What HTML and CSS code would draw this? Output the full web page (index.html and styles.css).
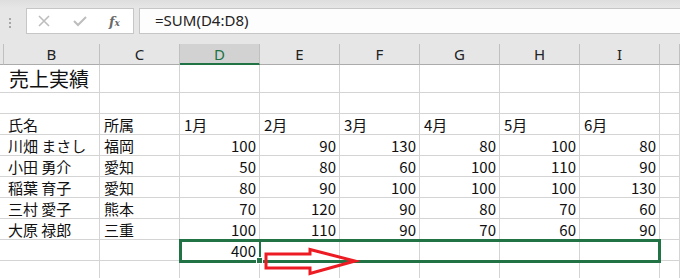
FILE: index.html
```html
<!DOCTYPE html>
<html lang="ja">
<head>
    <meta charset="UTF-8">
    <title>売上実績</title>
    <link rel="stylesheet" href="styles.css">
</head>
<body>
<div class="app">
    <div class="toolbar">
        <div class="grip"><span></span><span></span><span></span></div>
        <div class="fx-buttons">
            <svg class="btn-icon" width="12" height="12" viewBox="0 0 12 12"><path d="M1 1 L11 11 M11 1 L1 11" stroke="#bdbdbd" stroke-width="1.6" fill="none"/></svg>
            <svg class="btn-icon" width="14" height="12" viewBox="0 0 14 12"><path d="M1 6 L5 10 L13 2" stroke="#bdbdbd" stroke-width="2" fill="none"/></svg>
            <span class="fx">f<sub>x</sub></span>
        </div>
        <div class="formula">=SUM(D4:D8)</div>
    </div>

    <div class="sheet">
        <div class="col-head rh"></div>
        <div class="col-head">B</div>
        <div class="col-head">C</div>
        <div class="col-head active">D</div>
        <div class="col-head">E</div>
        <div class="col-head">F</div>
        <div class="col-head">G</div>
        <div class="col-head">H</div>
        <div class="col-head">I</div>
        <div class="col-head"></div>

        <div class="cell rh"></div>
        <div class="cell title">売上実績</div>
        <div class="cell"></div><div class="cell"></div><div class="cell"></div><div class="cell"></div>
        <div class="cell"></div><div class="cell"></div><div class="cell"></div><div class="cell"></div>

        <div class="cell rh"></div>
        <div class="cell"></div><div class="cell"></div><div class="cell"></div><div class="cell"></div>
        <div class="cell"></div><div class="cell"></div><div class="cell"></div><div class="cell"></div><div class="cell"></div>

        <div class="cell rh"></div>
        <div class="cell">氏名</div>
        <div class="cell">所属</div>
        <div class="cell">1月</div>
        <div class="cell">2月</div>
        <div class="cell">3月</div>
        <div class="cell">4月</div>
        <div class="cell">5月</div>
        <div class="cell">6月</div>
        <div class="cell"></div>

        <div class="cell rh"></div>
        <div class="cell">川畑 まさし</div>
        <div class="cell">福岡</div>
        <div class="cell num">100</div>
        <div class="cell num">90</div>
        <div class="cell num">130</div>
        <div class="cell num">80</div>
        <div class="cell num">100</div>
        <div class="cell num">80</div>
        <div class="cell"></div>

        <div class="cell rh"></div>
        <div class="cell">小田 勇介</div>
        <div class="cell">愛知</div>
        <div class="cell num">50</div>
        <div class="cell num">80</div>
        <div class="cell num">60</div>
        <div class="cell num">100</div>
        <div class="cell num">110</div>
        <div class="cell num">90</div>
        <div class="cell"></div>

        <div class="cell rh"></div>
        <div class="cell">稲葉 育子</div>
        <div class="cell">愛知</div>
        <div class="cell num">80</div>
        <div class="cell num">90</div>
        <div class="cell num">100</div>
        <div class="cell num">100</div>
        <div class="cell num">100</div>
        <div class="cell num">130</div>
        <div class="cell"></div>

        <div class="cell rh"></div>
        <div class="cell">三村 愛子</div>
        <div class="cell">熊本</div>
        <div class="cell num">70</div>
        <div class="cell num">120</div>
        <div class="cell num">90</div>
        <div class="cell num">80</div>
        <div class="cell num">70</div>
        <div class="cell num">60</div>
        <div class="cell"></div>

        <div class="cell rh"></div>
        <div class="cell">大原 禄郎</div>
        <div class="cell">三重</div>
        <div class="cell num">100</div>
        <div class="cell num">110</div>
        <div class="cell num">90</div>
        <div class="cell num">70</div>
        <div class="cell num">60</div>
        <div class="cell num">90</div>
        <div class="cell"></div>

        <div class="cell rh"></div>
        <div class="cell"></div>
        <div class="cell"></div>
        <div class="cell num">400</div>
        <div class="cell"></div><div class="cell"></div><div class="cell"></div>
        <div class="cell"></div><div class="cell"></div><div class="cell"></div>

        <div class="cell rh"></div>
        <div class="cell"></div><div class="cell"></div><div class="cell"></div><div class="cell"></div>
        <div class="cell"></div><div class="cell"></div><div class="cell"></div><div class="cell"></div><div class="cell"></div>
    </div>

    <!-- selection box and the red arrow drawn over the sheet -->
    <svg class="overlay" width="680" height="278" viewBox="0 0 680 278">
        <rect x="180.5" y="240.5" width="479" height="21" fill="none" stroke="#217346" stroke-width="3"/>
        <rect x="259" y="240" width="2" height="21" fill="#217346"/>
        <rect x="256.5" y="257.5" width="6" height="6" fill="#217346" stroke="#fff" stroke-width="1"/>
        <polygon points="266,254 310,254 310,249.5 355,261 310,273.5 310,268 266,268"
                 fill="none" stroke="#ed1c24" stroke-width="3" stroke-linejoin="miter"/>
    </svg>
</div>
</body>
</html>
```

FILE: styles.css
```css
body {
    margin: 0;
    background-color: #fff;
    font-family: "Noto Sans CJK JP", "Noto Sans", sans-serif;
    overflow: hidden;
}

.app {
    position: relative;
    width: 680px;
    height: 278px;
    overflow: hidden;
}

/* formula bar */
.toolbar {
    display: flex;
    align-items: flex-start;
    height: 44px;
    box-sizing: border-box;
    padding-top: 8px;
    background: linear-gradient(#dedede, #e6e6e6 8px);
}

.grip {
    display: flex;
    flex-direction: column;
    gap: 2px;
    width: 26px;
    padding: 10px 0 0 9px;
    box-sizing: border-box;
}

.grip span {
    width: 2px;
    height: 2px;
    background-color: #a6a6a6;
}

.fx-buttons {
    display: flex;
    align-items: center;
    width: 108px;
    height: 26px;
    box-sizing: border-box;
    background-color: #fff;
    border: 1px solid #c6c6c6;
    padding-left: 11px;
}

.btn-icon {
    margin-right: 23px;
}

.fx {
    font-family: "DejaVu Serif", "Liberation Serif", serif;
    font-style: italic;
    font-weight: bold;
    font-size: 13px;
    color: #6a6a6a;
    margin-left: -1px;
}

.fx sub {
    font-size: 9px;
    vertical-align: 0;
}

.formula {
    flex: 1;
    height: 26px;
    box-sizing: border-box;
    margin-left: 5px;
    background-color: #fdfdfd;
    border: 1px solid #c6c6c6;
    border-right: none;
    padding-left: 15px;
    font-family: "Noto Sans", sans-serif;
    font-size: 15px;
    line-height: 23px;
    color: #222;
}

/* sheet grid */
.sheet {
    display: grid;
    grid-template-columns: 4px 96px repeat(6, 80px) 80px 20px;
    grid-template-rows: 21px 28px;
    grid-auto-rows: 21px;
}

.col-head {
    box-sizing: border-box;
    background-color: #e6e6e6;
    border-right: 1px solid #c0c0c0;
    border-bottom: 1px solid #ababab;
    text-align: center;
    font-family: "Noto Sans", sans-serif;
    font-size: 15px;
    line-height: 21px;
    color: #222;
}

.col-head.active {
    background-color: #d2d2d2;
    border-bottom: 2px solid #217346;
    color: #217346;
}

.cell {
    display: flex;
    align-items: flex-end;
    box-sizing: border-box;
    border-right: 1px solid #d4d4d4;
    border-bottom: 1px solid #d4d4d4;
    padding: 0 3px 0 4px;
    font-size: 15px;
    line-height: 19px;
    color: #111;
    white-space: nowrap;
}

.cell.rh {
    border-right: none;
}

.cell.num {
    justify-content: flex-end;
}

.cell.title {
    font-size: 20px;
    line-height: 26px;
    padding-left: 5px;
}

.overlay {
    position: absolute;
    top: 0;
    left: 0;
    pointer-events: none;
}
```
